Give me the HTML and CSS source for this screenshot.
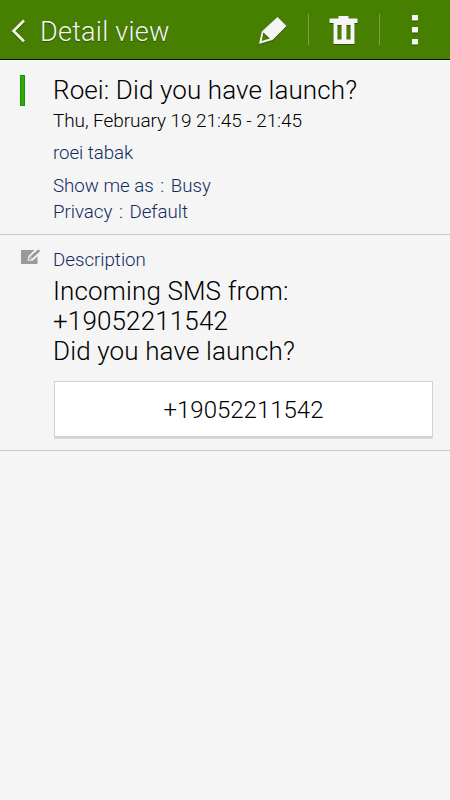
FILE: index.html
```html
<!DOCTYPE html>
<html lang="en">
<head>
<meta charset="utf-8">
<title>Detail view</title>
<link rel="stylesheet" href="styles.css">
</head>
<body>
<header class="bar">
  <svg class="back" width="16" height="26" viewBox="0 0 16 26"><path d="M15 2.5 4.5 13 15 23.5" fill="none" stroke="#f5f5f5" stroke-width="2.6"/></svg>
  <h1 class="bar-title"><span>Detail view</span></h1>
  <svg class="action" width="71" height="32" viewBox="0 1 71 32"><path fill="#f5f5f5" fill-rule="evenodd" d="M40.5 4 49.5 13 35.5 27 22 31 24.8 18.5ZM26.3 19.5 24.8 28 32.8 25.5Z"/></svg>
  <svg class="action divided" width="71" height="32" viewBox="0.5 1 70 32"><path fill="#f5f5f5" fill-rule="evenodd" d="M30 3H40V5.5H49V10H46V31H25V10H21V5.5H30ZM29 12V26.5H33V12ZM38 12V26.5H42V12Z"/></svg>
  <svg class="action divided" width="71" height="32" viewBox="0 1 70 32"><path fill="#f5f5f5" d="M32 2h6v5.5h-6zM32 14h6v5.5h-6zM32 26h6v5.5h-6z"/></svg>
</header>
<main>
  <section class="event">
    <div class="color-mark"></div>
    <div>
      <h2 class="title"><span>Roei: Did you have launch?</span></h2>
      <p class="time"><span>Thu, February 19 21:45 - 21:45</span></p>
      <p class="owner"><span>roei tabak</span></p>
      <p class="meta">Show me as<span class="colon"> : </span>Busy</p>
      <p class="meta">Privacy<span class="colon"> : </span>Default</p>
    </div>
  </section>
  <section class="description">
    <svg class="memo" width="20" height="16" viewBox="0 0 20 16"><path fill="#999" d="M0 1H16.5V15H0Z"/><path d="M6.5 12 7.5 7 14.500 0H20V4L12 11.500Z" fill="#f5f5f5"/><path d="M10.200 8.500 18.300 1.200" stroke="#999" stroke-width="2.800"/><path d="M7.500 11.300 8.800 7.700 11 10Z" fill="#999"/></svg>
    <div>
      <h3 class="label"><span>Description</span></h3>
      <p class="body"><span>Incoming SMS from:</span><span>+19052211542</span><span>Did you have launch?</span></p>
      <button class="phone"><span>+19052211542</span></button>
    </div>
  </section>
</main>
</body>
</html>
```
FILE: styles.css
```css
* { box-sizing: border-box; margin: 0; padding: 0; }
body {
  width: 450px;
  height: 800px;
  background: #f5f5f5;
  color: #000;
  font-family: Roboto, "Liberation Sans", sans-serif;
  font-weight: 300;
}
h1, h2, h3 { font-weight: 300; }
svg { display: block; }
.bar {
  display: flex;
  align-items: center;
  height: 60px;
  padding: 0 0 0 9px;
  background: #478000;
  border-bottom: 1px solid #0b1400;
}
.bar-title {
  flex: 1;
  margin: 4px 0 0 15px;
  font-size: 27px;
  letter-spacing: 0.25px;
  line-height: 32px;
  color: #f5f5f5;
  text-shadow: 0 1px 1px #2c5000;
}
.action { margin-top: 1px; }
.back { margin-top: 2px; }
.back, .action { filter: drop-shadow(0 1px 0 #2c5000); }
.divided { border-left: 1px solid #7aa24a; }
.event {
  display: grid;
  grid-template-columns: 33px 1fr;
  height: 175px;
  padding: 15px 16px 0 20px;
  border-top: 1px solid #fff;
  border-bottom: 1px solid #c8c8c8;
}
.color-mark {
  width: 5px;
  height: 31px;
  margin-top: -1px;
  background: #3aa60c;
  border: 1px solid #0b9b00;
}
.title { font-size: 26px; letter-spacing: 0.11px; line-height: 30px; margin-top: -1px; }
.time { font-size: 19px; letter-spacing: -0.08px; line-height: 24px; margin-top: 4px; }
.owner, .meta, .label { font-size: 18.7px; color: #102a5c; }
.owner { line-height: 25px; margin: 8px 0; letter-spacing: -0.05px; }
.meta { line-height: 25px; }
.meta + .meta { margin-top: 1px; }
.colon { word-spacing: 2px; }
.description {
  display: grid;
  grid-template-columns: 32px 1fr;
  height: 216px;
  padding: 13px 17px 0 21px;
  border-bottom: 1px solid #c8c8c8;
}
.memo { margin-top: 1px; }
.label { line-height: 24px; }
.body { font-size: 26px; letter-spacing: 0.14px; line-height: 30.4px; margin-top: 3.5px; }
.body span { display: block; width: max-content; }
.phone {
  display: block;
  width: 379px;
  height: 56px;
  margin: 14.3px 0 0 1px;
  padding-top: 2px;
  border: 1px solid #d2d2d2;
  background: #fff;
  box-shadow: 0 2px 0 -1px #d2d2d2, 0 2px 0 0 #ddd;
  color: #000;
  font: 300 24px Roboto, "Liberation Sans", sans-serif;
}
```
